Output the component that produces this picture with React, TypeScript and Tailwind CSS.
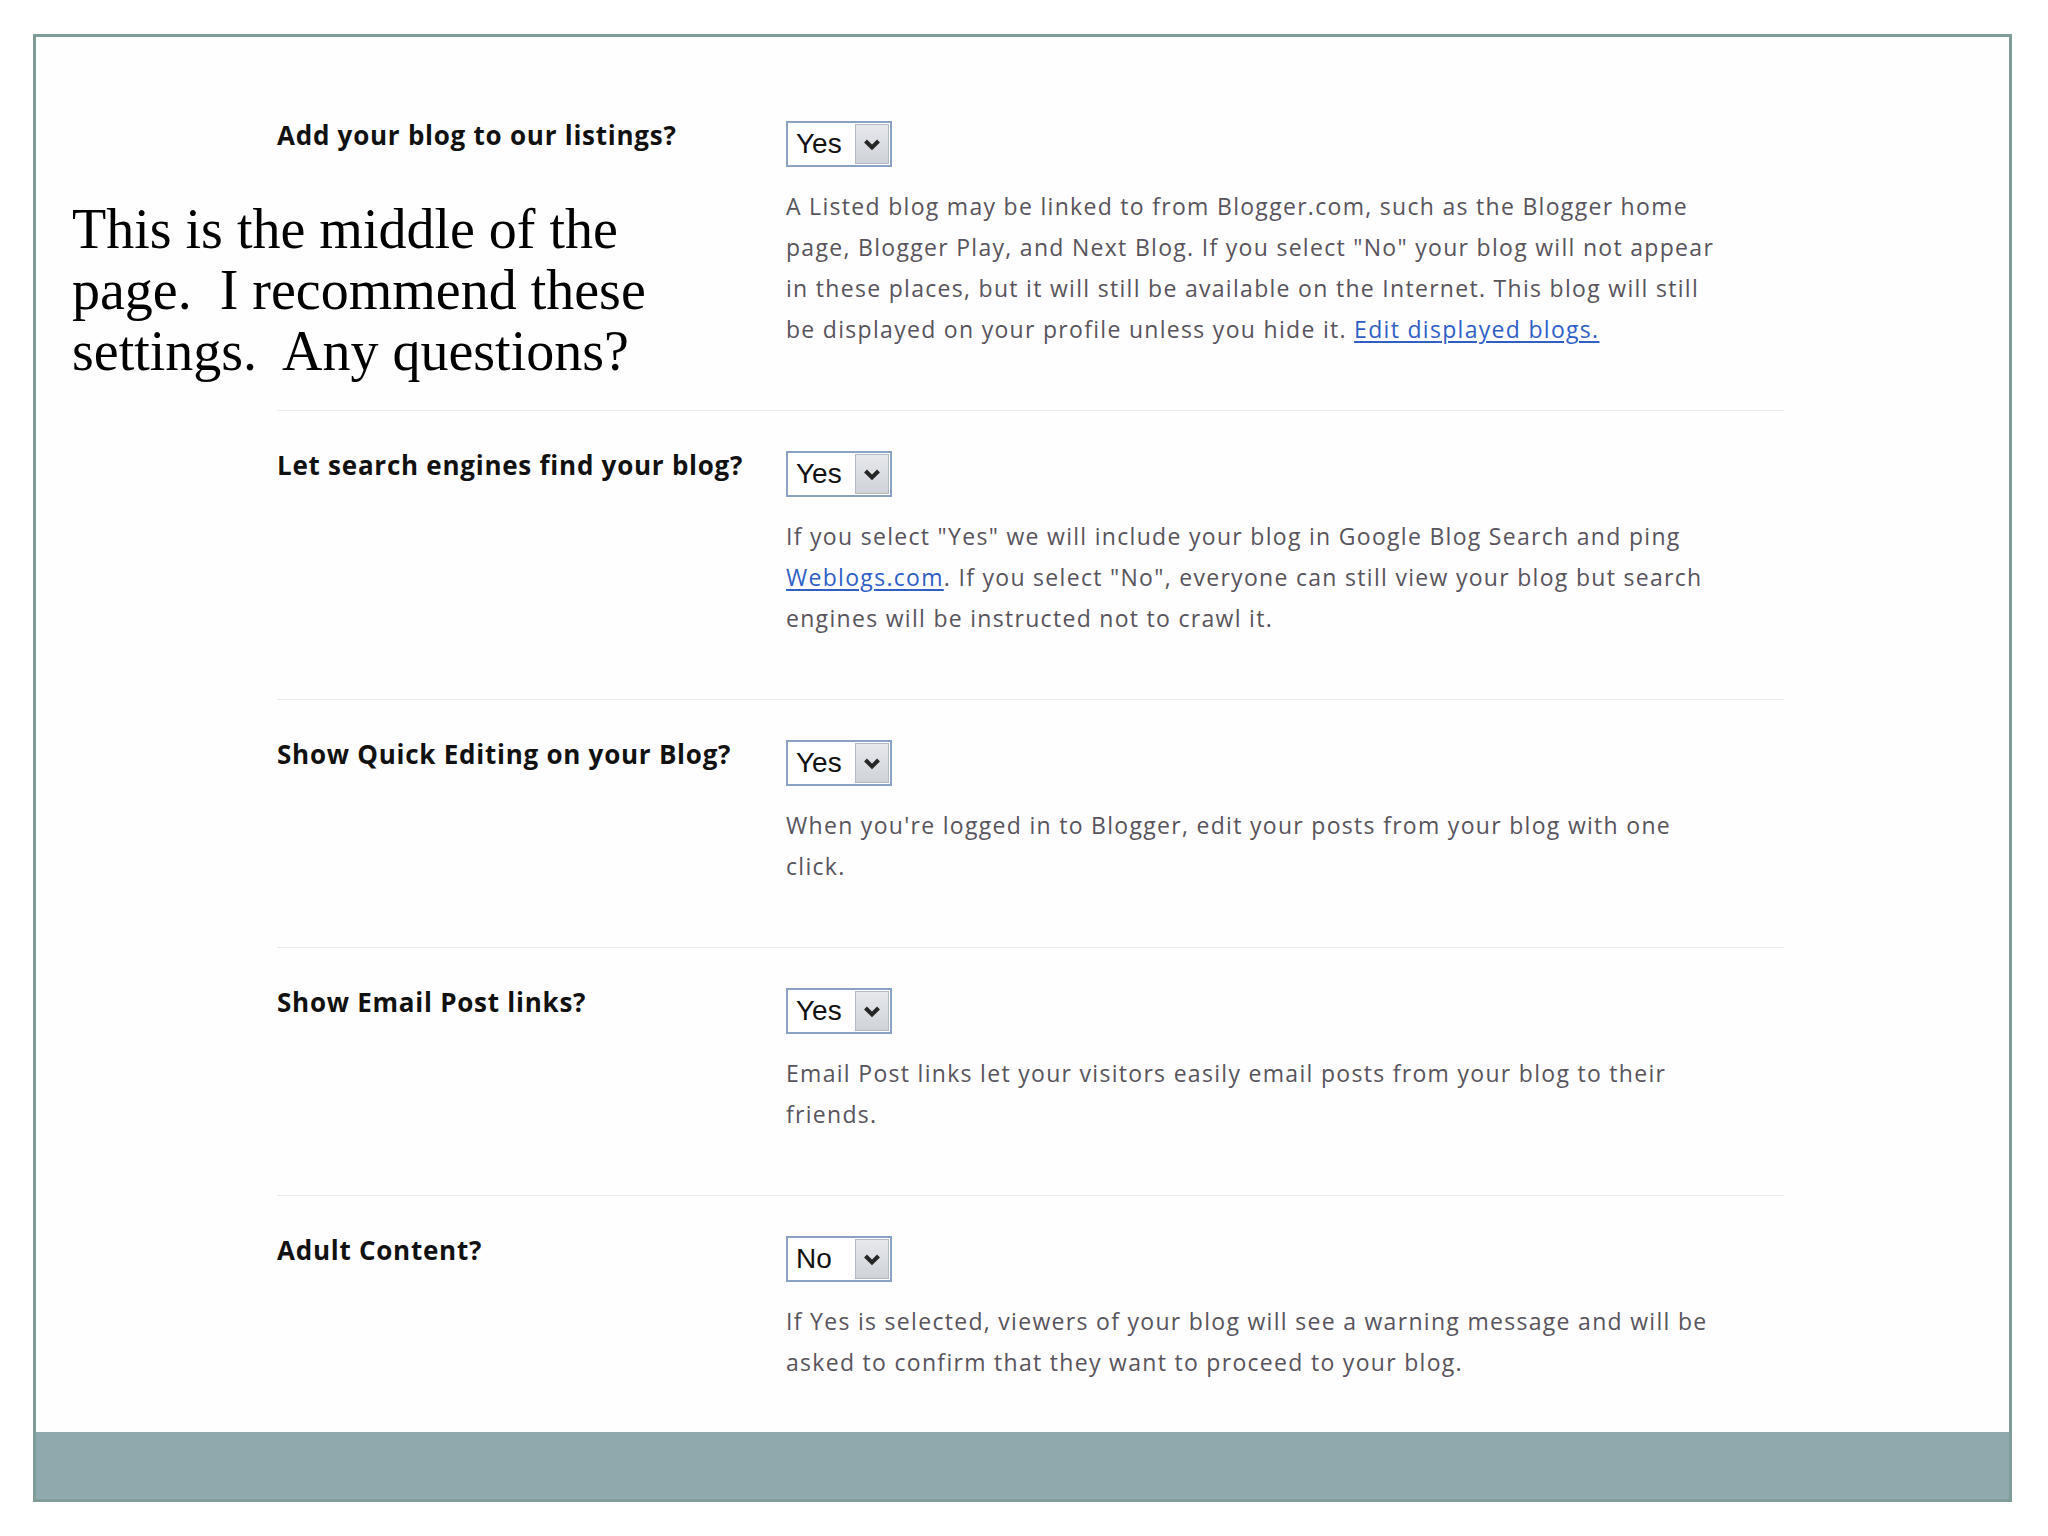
import React from "react";

type Row = {
  label: string;
  value: string;
  lines: React.ReactNode[];
};

const link = "text-[#2f5fc7] underline underline-offset-[3px] decoration-[2px]";

const rows: Row[] = [
  {
    label: "Add your blog to our listings?",
    value: "Yes",
    lines: [
      "A Listed blog may be linked to from Blogger.com, such as the Blogger home",
      'page, Blogger Play, and Next Blog. If you select "No" your blog will not appear',
      "in these places, but it will still be available on the Internet. This blog will still",
      <>
        be displayed on your profile unless you hide it. <span className={link}>Edit displayed blogs.</span>
      </>,
    ],
  },
  {
    label: "Let search engines find your blog?",
    value: "Yes",
    lines: [
      'If you select "Yes" we will include your blog in Google Blog Search and ping',
      <>
        <span className={link}>Weblogs.com</span>. If you select "No", everyone can still view your blog but search
      </>,
      "engines will be instructed not to crawl it.",
    ],
  },
  {
    label: "Show Quick Editing on your Blog?",
    value: "Yes",
    lines: ["When you're logged in to Blogger, edit your posts from your blog with one", "click."],
  },
  {
    label: "Show Email Post links?",
    value: "Yes",
    lines: ["Email Post links let your visitors easily email posts from your blog to their", "friends."],
  },
  {
    label: "Adult Content?",
    value: "No",
    lines: [
      "If Yes is selected, viewers of your blog will see a warning message and will be",
      "asked to confirm that they want to proceed to your blog.",
    ],
  },
];

function Select({ value }: { value: string }) {
  return (
    <div className="flex h-[46px] w-[106px] border-[2px] border-[#8aa3c4] bg-white">
      <div className="flex flex-1 items-center pl-[8px] font-['Liberation_Sans',sans-serif] text-[28px] leading-none text-[#111]">
        {value}
      </div>
      <div className="m-[1px] flex w-[34px] items-center justify-center border border-[#b3b9c2] bg-gradient-to-b from-[#e6e8ec] to-[#cfd3d9]">
        <svg width="18" height="13" viewBox="0 0 18 13">
          <path d="M2.5 3 L9 9.5 L15.5 3" fill="none" stroke="#262626" strokeWidth="4" strokeLinejoin="miter" />
        </svg>
      </div>
    </div>
  );
}

export default function App() {
  return (
    <div className="min-h-[1536px] w-[2048px] bg-white pt-[34px] pl-[33px]">
      <div className="flex h-[1468px] w-[1979px] flex-col border-[3px] border-[#7f9c98]">
        <div className="relative flex-1 bg-[#fefefe] pt-[84px] pl-[241px]">
          <div className="w-[1507px]">
            {rows.map((r, i) => (
              <div
                key={i}
                className={
                  "flex " +
                  (i === 0 ? "" : "pt-[40px] ") +
                  (i === rows.length - 1 ? "" : "border-b border-[#ebe9ee] pb-[60px]")
                }
              >
                <div className="w-[509px] font-['Open_Sans',sans-serif] text-[26px] font-bold leading-[28px] tracking-[0.75px] text-[#111]">
                  {r.label}
                </div>
                <div className="flex flex-col">
                  <Select value={r.value} />
                  <div className="mt-[19px] font-['Open_Sans',sans-serif] text-[23px] leading-[41px] tracking-[1.3px] text-[#58545c]">
                    {r.lines.map((l, j) => (
                      <div key={j} className="whitespace-nowrap">
                        {l}
                      </div>
                    ))}
                  </div>
                </div>
              </div>
            ))}
          </div>
          <div className="absolute left-[36px] top-[162px] font-['Liberation_Serif',serif] text-[56px] leading-[61px] text-black">
            <div className="whitespace-pre">This is the middle of the</div>
            <div className="whitespace-pre">page.  I recommend these</div>
            <div className="whitespace-pre">settings.  Any questions?</div>
          </div>
        </div>
        <div className="h-[67px] bg-[#8eaaac]" />
      </div>
    </div>
  );
}
